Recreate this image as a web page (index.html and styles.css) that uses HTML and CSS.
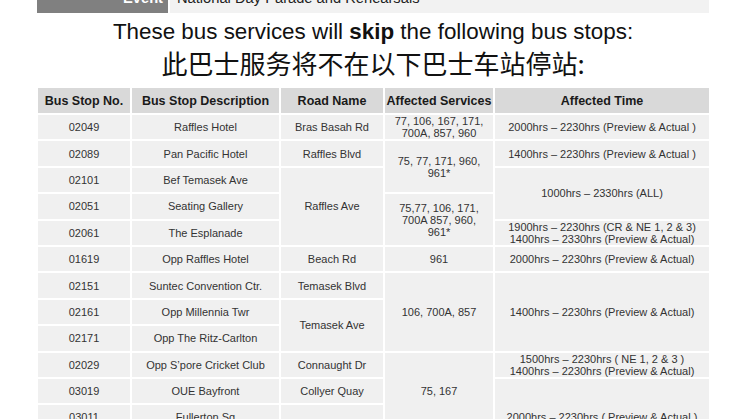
FILE: index.html
```html
<!DOCTYPE html>
<html lang="en">
<head>
<meta charset="utf-8">
<title>Bus stops skipped</title>
<link rel="stylesheet" href="styles.css">
</head>
<body>
<div class="event-bar">
  <div class="event-row">
    <div class="event-label">Event</div>
    <div class="event-value">National Day Parade and Rehearsals</div>
  </div>
</div>
<h1 class="title-en">These bus services will <b>skip</b> the following bus stops:</h1>
<h2 class="title-zh">此巴士服务将不在以下巴士车站停站:</h2>
<table class="stops">
  <colgroup>
    <col class="c1"><col class="c2"><col class="c3"><col class="c4"><col class="c5">
  </colgroup>
  <thead>
    <tr>
      <th>Bus Stop No.</th>
      <th>Bus Stop Description</th>
      <th>Road Name</th>
      <th>Affected Services</th>
      <th>Affected Time</th>
    </tr>
  </thead>
  <tbody>
    <tr>
      <td>02049</td><td>Raffles Hotel</td><td>Bras Basah Rd</td>
      <td>77, 106, 167, 171,<br>700A, 857, 960</td>
      <td>2000hrs – 2230hrs (Preview &amp; Actual )</td>
    </tr>
    <tr>
      <td>02089</td><td>Pan Pacific Hotel</td><td>Raffles Blvd</td>
      <td rowspan="2">75, 77, 171, 960,<br>961*</td>
      <td>1400hrs – 2230hrs (Preview &amp; Actual )</td>
    </tr>
    <tr>
      <td>02101</td><td>Bef Temasek Ave</td>
      <td rowspan="3">Raffles Ave</td>
      <td rowspan="2">1000hrs – 2330hrs (ALL)</td>
    </tr>
    <tr>
      <td>02051</td><td>Seating Gallery</td>
      <td rowspan="2">75,77, 106, 171,<br>700A 857, 960,<br>961*</td>
    </tr>
    <tr>
      <td>02061</td><td>The Esplanade</td>
      <td>1900hrs – 2230hrs (CR &amp; NE 1, 2 &amp; 3)<br>1400hrs – 2330hrs (Preview &amp; Actual)</td>
    </tr>
    <tr>
      <td>01619</td><td>Opp Raffles Hotel</td><td>Beach Rd</td><td>961</td>
      <td>2000hrs – 2230hrs (Preview &amp; Actual)</td>
    </tr>
    <tr>
      <td>02151</td><td>Suntec Convention Ctr.</td><td>Temasek Blvd</td>
      <td rowspan="3">106, 700A, 857</td>
      <td rowspan="3">1400hrs – 2230hrs (Preview &amp; Actual)</td>
    </tr>
    <tr>
      <td>02161</td><td>Opp Millennia Twr</td>
      <td rowspan="2">Temasek Ave</td>
    </tr>
    <tr>
      <td>02171</td><td>Opp The Ritz-Carlton</td>
    </tr>
    <tr>
      <td>02029</td><td>Opp S’pore Cricket Club</td><td>Connaught Dr</td>
      <td rowspan="3">75, 167</td>
      <td>1500hrs – 2230hrs ( NE 1, 2 &amp; 3 )<br>1400hrs – 2230hrs (Preview &amp; Actual)</td>
    </tr>
    <tr>
      <td>03019</td><td>OUE Bayfront</td><td>Collyer Quay</td>
      <td rowspan="3">2000hrs – 2230hrs ( Preview &amp; Actual )</td>
    </tr>
    <tr>
      <td>03011</td><td>Fullerton Sq</td>
      <td rowspan="2">Fullerton Rd</td>
    </tr>
    <tr>
      <td>03041</td><td>One Fullerton</td><td>75, 167</td>
    </tr>
  </tbody>
</table>
</body>
</html>
```

FILE: styles.css
```css
* { box-sizing: border-box; }

html, body {
  margin: 0;
  padding: 0;
  background: #ffffff;
  font-family: "Liberation Sans", Arial, "Noto Sans CJK SC", sans-serif;
  color: #222222;
}

.event-bar {
  margin: 0 37px;
  height: 13px;
  overflow: hidden;
}

.event-row {
  display: flex;
  height: 30px;
  margin-top: -17px;
  gap: 2px;
  font-size: 14.7px;
  line-height: 30px;
}

.event-label {
  width: 131px;
  background: #808080;
  color: #ffffff;
  font-weight: bold;
  text-align: right;
  padding-right: 5px;
}

.event-value {
  flex: 1;
  background: #f2f2f2;
  color: #222222;
  padding-left: 7px;
}

.title-en {
  margin: 2px 0 0;
  font-size: 22.4px;
  font-weight: normal;
  line-height: 34px;
  text-align: center;
  color: #111111;
}

.title-en b { font-weight: bold; }

.title-zh {
  margin: -2px 0 0;
  font-family: "Noto Sans CJK SC", sans-serif;
  font-size: 26px;
  font-weight: normal;
  line-height: 32px;
  text-align: center;
  color: #111111;
}

.stops {
  margin: 7px 0 0 36px;
  border-collapse: separate;
  border-spacing: 2px;
  table-layout: fixed;
  width: 675px;
  font-size: 11px;
  line-height: 12px;
  text-align: center;
}

.c1 { width: 92px; }
.c2 { width: 147px; }
.c3 { width: 102px; }
.c4 { width: 108px; }
.c5 { width: 214px; }

.stops th {
  height: 25px;
  padding: 0;
  background: #d9d9d9;
  font-size: 12.5px;
  font-weight: bold;
  color: #1a1a1a;
  white-space: nowrap;
}

.stops td {
  height: 24.4px;
  padding: 0;
  background: #f0f0f0;
  color: #333333;
  vertical-align: middle;
  white-space: nowrap;
}
```
